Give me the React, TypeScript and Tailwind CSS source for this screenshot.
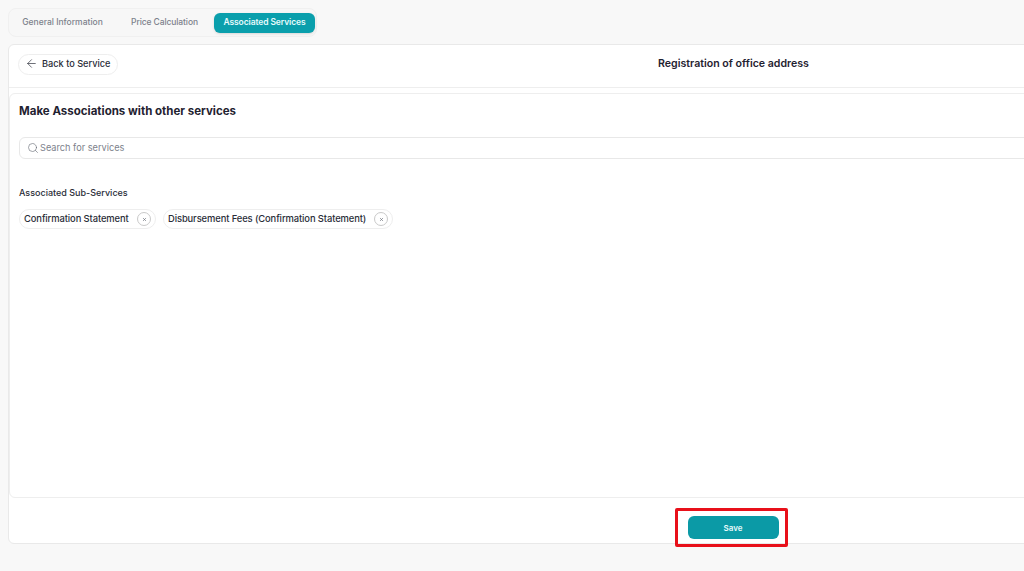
import React from 'react';
import { ArrowLeft, Search, X } from 'lucide-react';

const tabs = [
  { label: 'General Information', active: false },
  { label: 'Price Calculation', active: false },
  { label: 'Associated Services', active: true },
];

const subServices = [
  { name: 'Confirmation Statement', width: 'w-[137px]' },
  { name: 'Disbursement Fees (Confirmation Statement)', width: 'w-[230px]' },
];

const App: React.FC = () => {
  return (
    <div className="h-[571px] w-[1024px] overflow-hidden bg-[#f8f8f8] pl-2 pt-[8px] font-['Inter',sans-serif] text-[#1f2230]">
      {/* Tabs */}
      <div className="flex h-[29px] w-[309px] items-center rounded-lg border border-[#f0f0f0] bg-[#f7f7f7] pl-[1px]">
        {tabs.map((tab) => (
          <div
            key={tab.label}
            className={
              tab.active
                ? 'flex h-[20px] w-[101px] items-center justify-center rounded-md bg-[#0a9fac] pb-[1px] text-[8.5px] font-semibold tracking-[-0.1px] text-[#e6fbfc] shadow-sm'
                : 'flex h-[20px] w-[99px] items-center justify-center pb-[1px] text-[8.5px] font-medium tracking-[-0.1px] text-[#7d828c] first:w-[105px] first:tracking-normal'
            }
          >
            {tab.label}
          </div>
        ))}
      </div>

      {/* Main card */}
      <div className="mt-[7px] h-[500px] w-[1450px] rounded-md border border-[#e9e9e9] bg-white">
        <div className="flex h-[43px] items-center border-b border-[#eeeeee] pb-[4px] pl-[9px]">
          <button className="flex h-[21px] w-[100px] items-center gap-[4px] rounded-full border border-[#eeeeee] bg-white pl-[6px] text-[9.2px] font-medium text-[#2a2d38]">
            <ArrowLeft className="mb-[2px] h-[13px] w-[13px]" strokeWidth={1.25} />
            Back to Service
          </button>
          <h2 className="flex-1 pr-[108px] text-center text-[10.6px] font-semibold">Registration of office address</h2>
        </div>

        <div className="mt-[5px] h-[405px] rounded-md border border-[#eeeeee] bg-white pl-[9px]">
          <h1 className="pt-[9px] text-[11.5px] leading-[17px] font-bold">Make Associations with other services</h1>

          <div className="mt-[17px] flex h-[22px] items-center gap-[1px] rounded-md border border-[#e8e8e8] pl-[7px] text-[9.2px] text-[#7d828c]">
            <Search className="h-[12px] w-[12px] text-[#666b75]" strokeWidth={1.25} />
            Search for services
          </div>

          <h3 className="mt-[28px] text-[9px] leading-[12px] font-medium text-[#2a2d38]">Associated Sub-Services</h3>

          <div className="mt-[10px] flex gap-[7px]">
            {subServices.map((service) => (
              <div
                key={service.name}
                className={`flex h-[20px] items-center justify-between rounded-full border border-[#eeeeee] pl-[4px] pr-[4px] text-[9.4px] font-medium tracking-[-0.1px] text-[#2a2d38] ${service.width}`}
              >
                <span className="pt-[1px]">{service.name}</span>
                <span className="flex h-[14px] w-[14px] items-center justify-center rounded-full border border-[#c9c9c9]">
                  <X className="h-[5px] w-[5px] text-[#666b75]" strokeWidth={3} />
                </span>
              </div>
            ))}
          </div>
        </div>

        {/* Footer */}
        <div className="flex h-[46px] items-start justify-center pt-[18px]">
          <div className="relative">
            <button className="flex h-[23px] w-[91px] items-center justify-center rounded-md bg-[#0b9aa6] text-[8px] font-semibold text-[#e6fbfc]">
              Save
            </button>
            <div className="absolute -bottom-[8px] -left-[13px] -right-[9px] -top-[8px] rounded-[2px] border-[3px] border-[#e8101a]" />
          </div>
        </div>
      </div>
    </div>
  );
};

export default App;
